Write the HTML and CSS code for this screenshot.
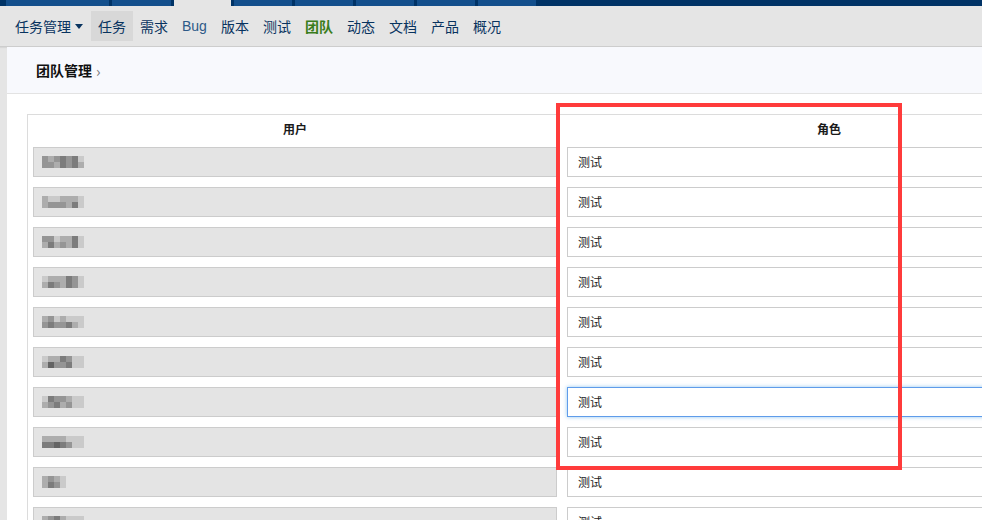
FILE: index.html
```html
<!DOCTYPE html>
<html lang="zh-CN">
<head>
<meta charset="utf-8">
<title>团队管理</title>
<link rel="stylesheet" href="styles.css">
</head>
<body>
<div class="topbar">
  <span class="tab w1"></span><span class="tab w2"></span><span class="tab active"></span><span class="tab"></span><span class="tab"></span><span class="tab"></span><span class="tab"></span><span class="tab"></span>
</div>
<nav class="nav">
  <span class="nav-item first">任务管理<span class="caret"></span></span>
  <span class="nav-item current">任务</span>
  <span class="nav-item">需求</span>
  <span class="nav-item bug">Bug</span>
  <span class="nav-item">版本</span>
  <span class="nav-item">测试</span>
  <span class="nav-item nav-team">团队</span>
  <span class="nav-item">动态</span>
  <span class="nav-item">文档</span>
  <span class="nav-item">产品</span>
  <span class="nav-item">概况</span>
</nav>
<main class="main">
  <section class="panel">
    <header class="panel-head"><strong class="crumb">团队管理</strong><span class="chev">›</span></header>
    <div class="panel-body">
      <table class="member-table">
        <colgroup><col class="c"><col class="c"></colgroup>
        <thead><tr><th>用户</th><th>角色</th></tr></thead>
        <tbody>
          <tr><td><div class="user"><span class="mosaic"><i class="c"></i><i class="b"></i><i class="c"></i><i class="d"></i><i class="c"></i><i class="d"></i><i class="a"></i><i class="c"></i><i class="c"></i><i class="b"></i><i class="d"></i><i class="c"></i><i class="d"></i><i class="b"></i></span></div></td><td><div class="role">测试</div></td></tr>
          <tr><td><div class="user"><span class="mosaic"><i class="b"></i><i class="a"></i><i class="a"></i><i class="b"></i><i class="b"></i><i class="b"></i><i class="a"></i><i class="b"></i><i class="c"></i><i class="c"></i><i class="c"></i><i class="b"></i><i class="d"></i><i class="a"></i></span></div></td><td><div class="role">测试</div></td></tr>
          <tr><td><div class="user"><span class="mosaic"><i class="c"></i><i class="c"></i><i class="a"></i><i class="b"></i><i class="b"></i><i class="d"></i><i class="a"></i><i class="b"></i><i class="d"></i><i class="b"></i><i class="c"></i><i class="b"></i><i class="d"></i><i class="a"></i></span></div></td><td><div class="role">测试</div></td></tr>
          <tr><td><div class="user"><span class="mosaic"><i class="a"></i><i class="b"></i><i class="b"></i><i class="b"></i><i class="d"></i><i class="c"></i><i class="a"></i><i class="b"></i><i class="d"></i><i class="c"></i><i class="b"></i><i class="d"></i><i class="c"></i><i class="a"></i></span></div></td><td><div class="role">测试</div></td></tr>
          <tr><td><div class="user"><span class="mosaic"><i class="b"></i><i class="c"></i><i class="a"></i><i class="b"></i><i class="a"></i><i class="a"></i><i class="a"></i><i class="c"></i><i class="d"></i><i class="c"></i><i class="c"></i><i class="d"></i><i class="b"></i><i class="a"></i></span></div></td><td><div class="role">测试</div></td></tr>
          <tr><td><div class="user"><span class="mosaic"><i class="a"></i><i class="b"></i><i class="b"></i><i class="d"></i><i class="c"></i><i class="a"></i><i class="a"></i><i class="b"></i><i class="e"></i><i class="c"></i><i class="c"></i><i class="d"></i><i class="a"></i><i class="a"></i></span></div></td><td><div class="role">测试</div></td></tr>
          <tr><td><div class="user"><span class="mosaic"><i class="a"></i><i class="d"></i><i class="c"></i><i class="c"></i><i class="b"></i><i class="a"></i><i class="a"></i><i class="b"></i><i class="c"></i><i class="d"></i><i class="b"></i><i class="c"></i><i class="a"></i><i class="a"></i></span></div></td><td><div class="role focus">测试</div></td></tr>
          <tr><td><div class="user"><span class="mosaic"><i class="b"></i><i class="b"></i><i class="b"></i><i class="b"></i><i class="a"></i><i class="a"></i><i class="a"></i><i class="d"></i><i class="d"></i><i class="e"></i><i class="d"></i><i class="c"></i><i class="a"></i><i class="a"></i></span></div></td><td><div class="role">测试</div></td></tr>
          <tr><td><div class="user"><span class="mosaic"><i class="b"></i><i class="c"></i><i class="b"></i><i class="a"></i><i class="x"></i><i class="x"></i><i class="x"></i><i class="b"></i><i class="d"></i><i class="c"></i><i class="a"></i><i class="x"></i><i class="x"></i><i class="x"></i></span></div></td><td><div class="role">测试</div></td></tr>
          <tr><td><div class="user"><span class="mosaic"><i class="b"></i><i class="c"></i><i class="d"></i><i class="b"></i><i class="a"></i><i class="a"></i><i class="a"></i><i class="b"></i><i class="b"></i><i class="b"></i><i class="b"></i><i class="a"></i><i class="a"></i><i class="a"></i></span></div></td><td><div class="role">测试</div></td></tr>
        </tbody>
      </table>
    </div>
  </section>
</main>
<div class="highlight"></div>
</body>
</html>
```
FILE: styles.css
```css
html, body {
  margin: 0;
  padding: 0;
}
body {
  width: 982px;
  height: 520px;
  overflow: hidden;
  background: #e5e5e5;
  font-family: "Noto Sans CJK SC", "Liberation Sans", sans-serif;
  position: relative;
}
.topbar {
  height: 6px;
  background: #003366;
  display: flex;
  gap: 3px;
  padding-left: 6px;
}
.tab {
  flex: none;
  width: 58px;
  background: #134f8c;
}
.tab.w1 { width: 103px; }
.tab.w2 { width: 59px; }
.tab.active { width: 57px; background: #e5e5e5; }
.nav {
  height: 40px;
  display: flex;
  align-items: center;
  padding-left: 8px;
  border-bottom: 1px solid #cdcdcd;
  box-shadow: 0 1px 1px rgba(0,0,0,0.06);
  background: #e5e5e5;
}
.nav-item {
  flex: none;
  height: 30px;
  line-height: 30px;
  padding: 0 7px;
  font-size: 14px;
  color: #08335f;
  white-space: nowrap;
}
.nav-item.first {
  display: flex;
  align-items: center;
  padding-right: 8px;
}
.caret {
  width: 0;
  height: 0;
  margin-left: 4px;
  border-left: 4px solid transparent;
  border-right: 4px solid transparent;
  border-top: 5px solid #08335f;
}
.nav-item.current { background: #d8d8d8; }
.nav-item.bug { color: #2d5a88; font-family: "Liberation Sans", sans-serif; }
.nav-item.nav-team {
  color: #3a7d1c;
  font-weight: 700;
}
.main {
  padding-left: 7px;
}
.panel {
  background: #fff;
  height: 480px;
}
.panel-head {
  height: 46px;
  background: #f8f9fd;
  border-bottom: 1px solid #e3e3e3;
  display: flex;
  align-items: center;
  padding-left: 29px;
  font-size: 14px;
  color: #111;
}
.crumb { font-weight: 700; }
.chev {
  color: #777;
  margin-left: 4px;
  font-size: 15px;
}
.panel-body {
  padding: 20px 0 0 20px;
}
.member-table {
  border-collapse: collapse;
  table-layout: fixed;
  width: 1070px;
  border: 1px solid #dcdcdc;
  font-size: 12px;
}
.member-table col.c { width: 534px; }
.member-table th {
  height: 27px;
  padding: 0;
  font-weight: 700;
  color: #1a1a1a;
  text-align: center;
  vertical-align: middle;
}
.member-table td {
  padding: 5px;
}
.user, .role {
  box-sizing: border-box;
  height: 30px;
  border: 1px solid #cccccc;
  display: flex;
  align-items: center;
}
.user {
  background: #e4e4e4;
  padding-left: 8px;
}
.role {
  background: #fff;
  padding: 0 0 2px 10px;
  color: #222;
}
.role.focus {
  border-color: #5f9cea;
  box-shadow: 0 0 4px rgba(102,175,233,0.7);
}
.mosaic {
  display: grid;
  grid-template-columns: repeat(7, 6px);
  grid-auto-rows: 6px;
  background: #d6d6d6;
}
.mosaic i { display: block; }
.mosaic i.x { background: #e4e4e4; }
.mosaic i.a { background: #cacaca; }
.mosaic i.b { background: #adadad; }
.mosaic i.c { background: #959595; }
.mosaic i.d { background: #7c7c7c; }
.mosaic i.e { background: #646464; }
.highlight {
  position: absolute;
  left: 556px;
  top: 103px;
  width: 338px;
  height: 359px;
  border: 4px solid #ff3b3b;
}
```
